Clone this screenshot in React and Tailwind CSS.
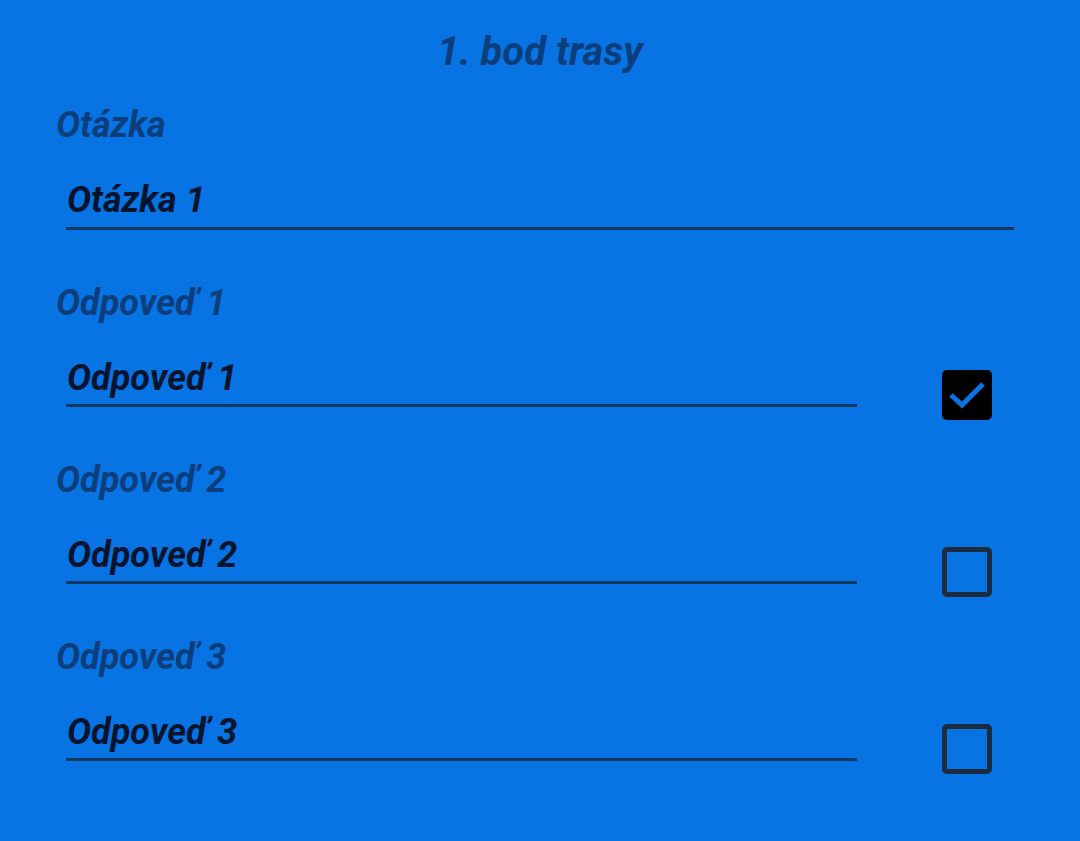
import React from "react";

const answers = [
  { label: "Odpoveď 1", value: "Odpoveď 1", correct: true },
  { label: "Odpoveď 2", value: "Odpoveď 2", correct: false },
  { label: "Odpoveď 3", value: "Odpoveď 3", correct: false },
];

const CheckBox = ({ checked }) => {
  if (checked) {
    return (
      <svg width="50" height="50" viewBox="0 0 50 50" className="shrink-0">
        <rect x="0" y="0" width="50" height="50" rx="5" fill="#000" />
        <polyline
          points="9,25 20,35 41,14"
          fill="none"
          stroke="#0873e3"
          strokeWidth="5"
        />
      </svg>
    );
  }
  return (
    <div className="w-[50px] h-[50px] shrink-0 rounded-[5px] border-[5px] border-[#1c2b3d]" />
  );
};

const Field = ({ value, className }) => (
  <div className={`border-b-[3px] border-[#143960] ${className}`}>
    <div className="text-[36px] leading-[40px] text-[#03142e] pl-px">{value}</div>
  </div>
);

export default function App() {
  return (
    <div
      className="w-[1080px] h-[841px] bg-[#0873e3] italic font-bold overflow-hidden"
      style={{ fontFamily: "Roboto, 'Liberation Sans', sans-serif" }}
    >
      <div className="pt-[28px] text-center text-[40px] leading-[48px] text-[#0b3e7b]">
        1. bod trasy
      </div>

      <div className="mt-[29px] pl-[56px] text-[36px] leading-[40px] text-[#0b3e7b]">Otázka</div>
      <Field value="Otázka 1" className="mt-[35px] ml-[66px] w-[948px] pb-[7px]" />

      <div className="mt-[53px] flex flex-col gap-[53px]">
        {answers.map((a) => (
          <div key={a.label} className="flex flex-col">
            <div className="pl-[56px] text-[36px] leading-[40px] text-[#0b3e7b]">{a.label}</div>
            <div className="mt-[35px] flex items-start">
              <Field value={a.value} className="ml-[66px] w-[791px] pb-[6px]" />
              <div className="ml-[85px] mt-[12px] -mb-[13px]">
                <CheckBox checked={a.correct} />
              </div>
            </div>
          </div>
        ))}
      </div>
    </div>
  );
}
